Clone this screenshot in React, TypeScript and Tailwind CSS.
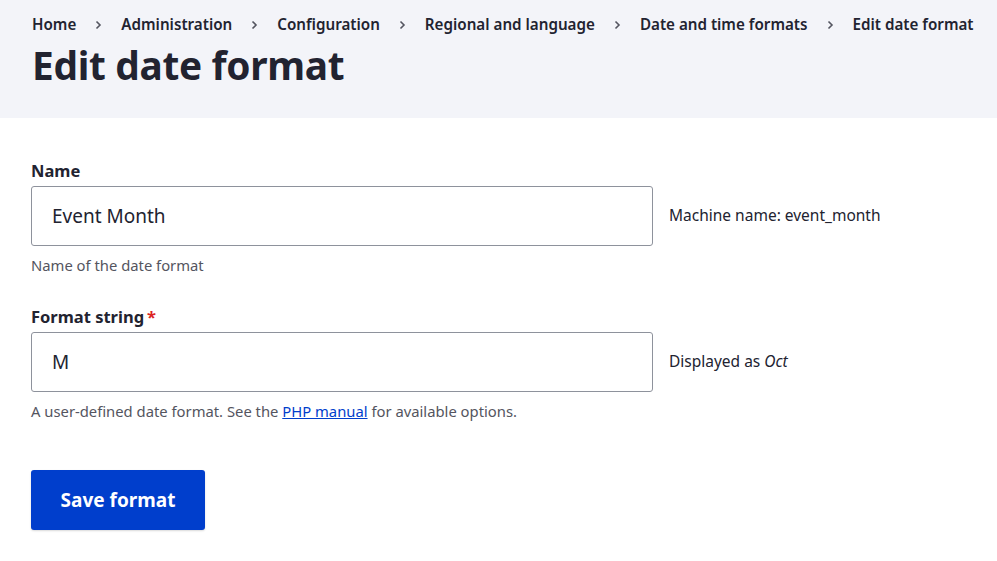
// Edit date format — Claro-style admin form (regional settings).

const FONT = "font-['Noto_Sans','Open_Sans',sans-serif]";

const crumbs = [
    "Home",
    "Administration",
    "Configuration",
    "Regional and language",
    "Date and time formats",
    "Edit date format",
];

function Chevron() {
    return (
        <svg width="7" height="10" viewBox="0 0 7 10" className="mx-[19px] shrink-0" aria-hidden="true">
            <path d="M1.5 1.5 L5 5 L1.5 8.5" fill="none" stroke="#545560" strokeWidth="1.6" />
        </svg>
    );
}

function Breadcrumb() {
    return (
        <nav className="flex items-center text-[15.2px] font-semibold leading-none text-[#222330]">
            {crumbs.map((label, i) => (
                <span key={label} className="flex items-center whitespace-nowrap">
                    {i > 0 && <Chevron />}
                    {label}
                </span>
            ))}
        </nav>
    );
}

type FieldProps = {
    label: string;
    value: string;
    required?: boolean;
    suffix: React.ReactNode;
    description: React.ReactNode;
};

function Field({ label, value, required, suffix, description }: FieldProps) {
    return (
        <div className="flex flex-col">
            <label className="flex items-center text-[16.5px] font-bold leading-[22px] text-[#222330]">
                {label}
                {required && <span className="ml-[3px] text-[#dc2323]">*</span>}
            </label>
            <div className="mt-[4px] flex items-center">
                <div className="flex h-[60px] w-[622px] items-center rounded-[3px] border border-[#8e929c] bg-white px-[20px] text-[19px] text-[#222330]">
                    {value}
                </div>
                <span className="ml-[16px] text-[15.5px] text-[#222330]">{suffix}</span>
            </div>
            <p className="mt-[9px] text-[14.8px] leading-[20px] text-[#545560]">{description}</p>
        </div>
    );
}

export default function App() {
    return (
        <div className={`${FONT} min-h-[561px] bg-white`}>
            <header className="h-[118px] bg-[#f3f4f9] px-[32px] pt-[17px]">
                <Breadcrumb />
                <h1 className="mt-[10px] text-[38.8px] font-bold leading-[46px] tracking-[-0.3px] text-[#222330]">
                    Edit date format
                </h1>
            </header>

            <main className="flex flex-col gap-[31px] px-[31px] pt-[42px]">
                <Field
                    label="Name"
                    value="Event Month"
                    suffix="Machine name: event_month"
                    description="Name of the date format"
                />
                <Field
                    label="Format string"
                    value="M"
                    required
                    suffix={
                        <>
                            Displayed as <em>Oct</em>
                        </>
                    }
                    description={
                        <>
                            A user-defined date format. See the{" "}
                            <a href="#" className="text-[#003ecc] underline">
                                PHP manual
                            </a>{" "}
                            for available options.
                        </>
                    }
                />
                <div className="pt-[18px]">
                    <button className="h-[60px] w-[174px] rounded-[3px] bg-[#003ecc] text-[19px] font-bold text-white shadow-[0_1px_2px_rgba(0,0,0,0.15)]">
                        Save format
                    </button>
                </div>
            </main>
        </div>
    );
}
